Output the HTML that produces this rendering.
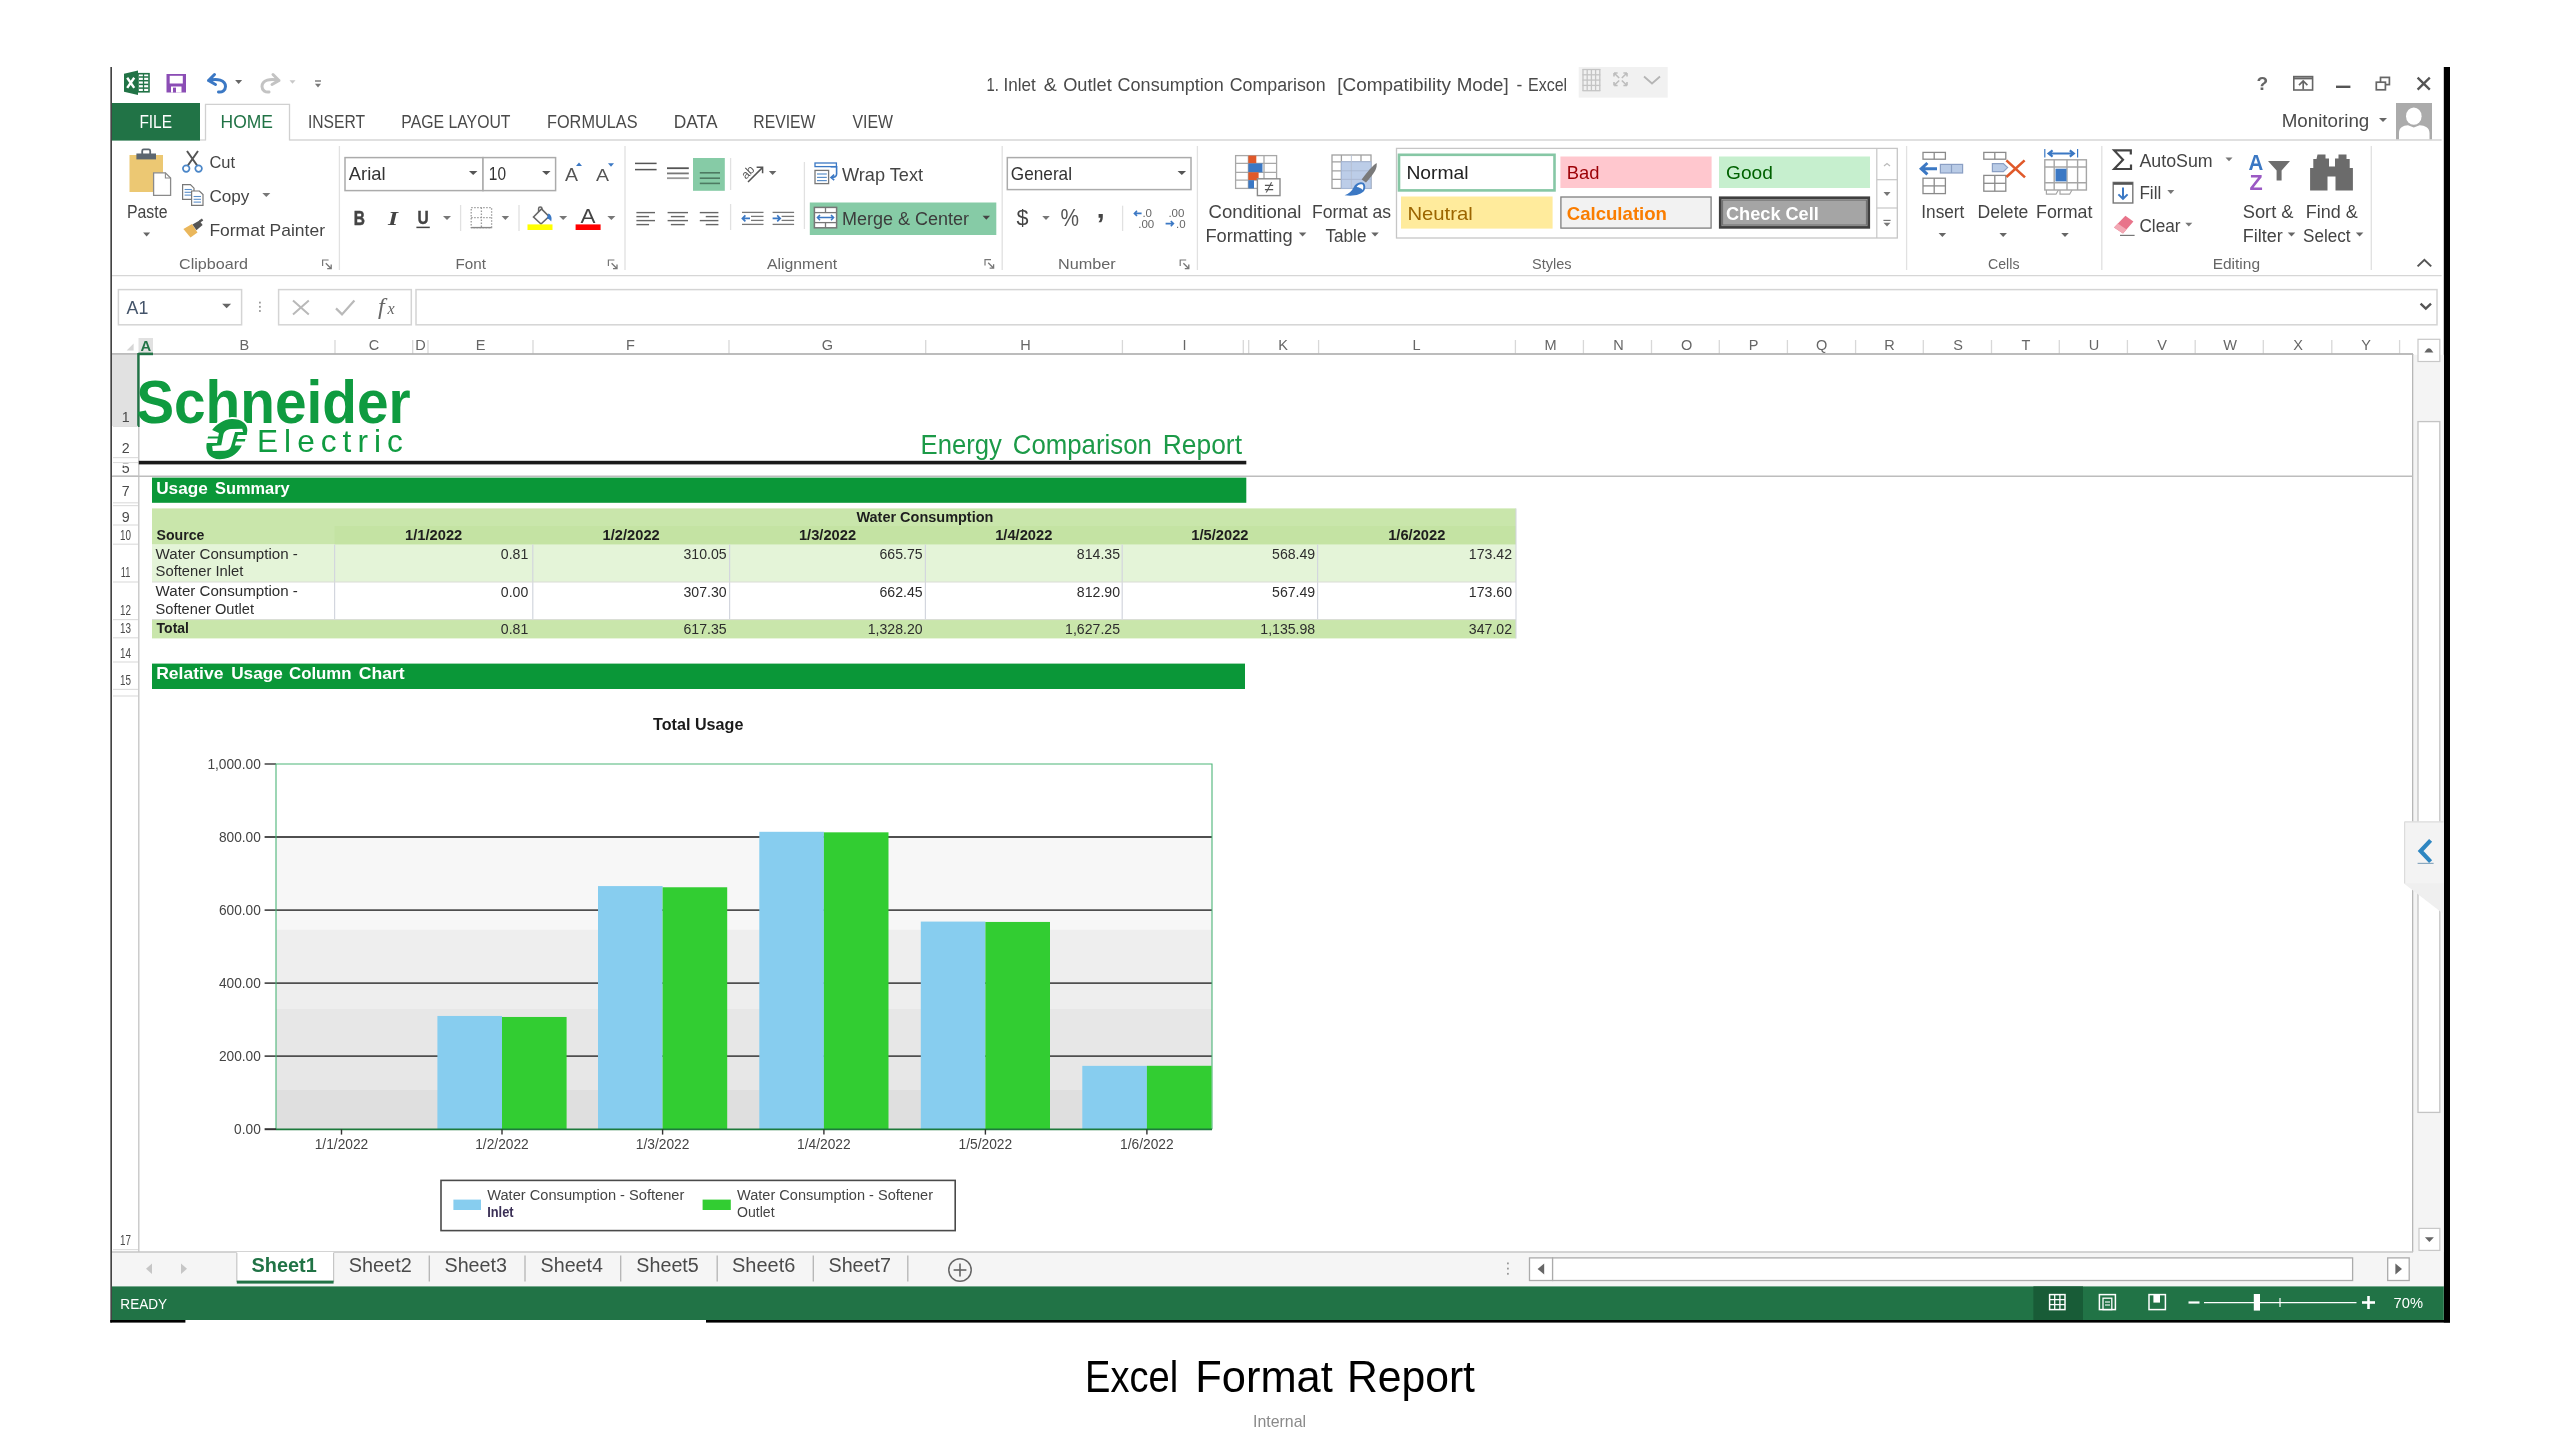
<!DOCTYPE html>
<html lang="en"><head><meta charset="utf-8"><title>Excel Format Report</title>
<style>
html,body{margin:0;padding:0;background:#fff;}
body{width:2560px;height:1440px;overflow:hidden;font-family:"Liberation Sans",sans-serif;}
svg{display:block;will-change:transform;font-family:"Liberation Sans",sans-serif;}
text{white-space:pre;}
</style></head><body>
<svg width="2560" height="1440" viewBox="0 0 2560 1440">
<rect x="0.00" y="0.00" width="2560.00" height="1440.00" fill="#ffffff" />
<rect x="110.40" y="67.00" width="1.50" height="1255.50" fill="#303030" />
<rect x="2443.80" y="67.00" width="6.20" height="1255.50" fill="#000000" />
<g transform="translate(124,70.5)">
<path d="M0,3.2 L14,0 V24.5 L0,21.3 Z" fill="#217346" />
<rect x="14.00" y="3.20" width="11.00" height="18.10" fill="#ffffff" stroke="#217346" stroke-width="1.6" />
<line x1="15.00" y1="6.50" x2="24.50" y2="6.50" stroke="#217346" stroke-width="1.5" />
<line x1="15.00" y1="10.20" x2="24.50" y2="10.20" stroke="#217346" stroke-width="1.5" />
<line x1="15.00" y1="13.90" x2="24.50" y2="13.90" stroke="#217346" stroke-width="1.5" />
<line x1="15.00" y1="17.60" x2="24.50" y2="17.60" stroke="#217346" stroke-width="1.5" />
<line x1="19.50" y1="3.50" x2="19.50" y2="21.00" stroke="#217346" stroke-width="1.3" />
<path d="M3.2,7.2 L10.2,17.4 M10.2,7.2 L3.2,17.4" fill="none" stroke="#ffffff" stroke-width="2.4" />
</g>
<g transform="translate(166.5,74)">
<path d="M0,0 H19.5 V18.5 H0 Z" fill="#8b4db5" />
<rect x="3.20" y="1.80" width="13.10" height="7.70" fill="#ffffff" />
<rect x="4.50" y="12.50" width="10.50" height="6.00" fill="#ffffff" />
<rect x="6.50" y="13.60" width="3.00" height="4.90" fill="#8b4db5" />
</g>
<path d="M208.5,80.5 L214.5,74.5 M208.5,80.5 L215.5,84.5 M208.5,80.5 C217,78 225.5,80 225.5,86.5 C225.5,90.5 222,92.5 218.5,92" fill="none" stroke="#3b78c4" stroke-width="3" stroke-linecap="round" stroke-linejoin="round"/>
<path d="M235.10,80.00h7l-3.5,4z" fill="#666" />
<path d="M279,80.5 L273,74.5 M279,80.5 L272,84.5 M279,80.5 C270.5,78 262,80 262,86.5 C262,90.5 265.5,92.5 269,92" fill="none" stroke="#c3c3c3" stroke-width="3" stroke-linecap="round" stroke-linejoin="round"/>
<path d="M289.50,80.25h6l-3.0,3.5z" fill="#c8c8c8" />
<line x1="315.00" y1="81.00" x2="321.00" y2="81.00" stroke="#777" stroke-width="1.4" />
<path d="M315.00,83.80h6l-3.0,3.6z" fill="#777" />
<text x="986.60" y="91.20" font-size="17.88" fill="#4a4a4a" textLength="12.40" lengthAdjust="spacingAndGlyphs" >1.</text>
<text x="1003.40" y="91.20" font-size="17.88" fill="#4a4a4a" textLength="32.30" lengthAdjust="spacingAndGlyphs" >Inlet</text>
<text x="1043.80" y="91.20" font-size="17.88" fill="#4a4a4a" textLength="13.00" lengthAdjust="spacingAndGlyphs" >&amp;</text>
<text x="1063.20" y="91.20" font-size="17.88" fill="#4a4a4a" textLength="48.60" lengthAdjust="spacingAndGlyphs" >Outlet</text>
<text x="1117.60" y="91.20" font-size="17.88" fill="#4a4a4a" textLength="106.10" lengthAdjust="spacingAndGlyphs" >Consumption</text>
<text x="1229.70" y="91.20" font-size="17.88" fill="#4a4a4a" textLength="96.00" lengthAdjust="spacingAndGlyphs" >Comparison</text>
<text x="1337.30" y="91.20" font-size="17.88" fill="#4a4a4a" textLength="113.60" lengthAdjust="spacingAndGlyphs" >[Compatibility</text>
<text x="1456.70" y="91.20" font-size="17.88" fill="#4a4a4a" textLength="52.00" lengthAdjust="spacingAndGlyphs" >Mode]</text>
<text x="1516.50" y="91.20" font-size="17.88" fill="#4a4a4a" textLength="5.80" lengthAdjust="spacingAndGlyphs" >-</text>
<text x="1528.00" y="91.20" font-size="17.88" fill="#4a4a4a" textLength="39.10" lengthAdjust="spacingAndGlyphs" >Excel</text>
<rect x="1578.70" y="67.00" width="89.00" height="30.60" fill="#f1f1f1" />
<g stroke="#c4c4c4" stroke-width="1.3">
<line x1="1583.00" y1="69.00" x2="1583.00" y2="91.00" />
<line x1="1587.20" y1="69.00" x2="1587.20" y2="91.00" />
<line x1="1591.40" y1="69.00" x2="1591.40" y2="91.00" />
<line x1="1595.60" y1="69.00" x2="1595.60" y2="91.00" />
<line x1="1599.80" y1="69.00" x2="1599.80" y2="91.00" />
<line x1="1582.50" y1="69.50" x2="1600.30" y2="69.50" />
<line x1="1582.50" y1="74.80" x2="1600.30" y2="74.80" />
<line x1="1582.50" y1="80.10" x2="1600.30" y2="80.10" />
<line x1="1582.50" y1="85.40" x2="1600.30" y2="85.40" />
<line x1="1582.50" y1="90.70" x2="1600.30" y2="90.70" />
</g>
<path d="M1614,73 l5.2,5 M1627,73 l-5.2,5 M1614,85.5 l5.2,-5 M1627,85.5 l-5.2,-5 M1614,73 h3.6 M1614,73 v3.6 M1627,73 h-3.6 M1627,73 v3.6 M1614,85.5 h3.6 M1614,85.5 v-3.6 M1627,85.5 h-3.6 M1627,85.5 v-3.6" fill="none" stroke="#bdbdbd" stroke-width="1.6" />
<path d="M1644,76.5 l8,7 l8,-7" fill="none" stroke="#b5b5b5" stroke-width="1.8" />
<text x="2262.40" y="90.00" font-size="19.19" fill="#666" font-weight="bold" text-anchor="middle" >?</text>
<rect x="2293.80" y="76.60" width="18.80" height="13.40" fill="none" stroke="#666" stroke-width="1.6" />
<line x1="2293.80" y1="78.40" x2="2312.60" y2="78.40" stroke="#666" stroke-width="2" />
<path d="M2303.2,89.5 V81 M2299,85.2 L2303.2,81 L2307.4,85.2" fill="none" stroke="#666" stroke-width="1.7" />
<rect x="2336.00" y="85.60" width="14.40" height="2.40" fill="#555" />
<rect x="2380.50" y="77.40" width="8.90" height="7.20" fill="none" stroke="#666" stroke-width="1.7" />
<rect x="2376.30" y="82.20" width="9.10" height="7.60" fill="#fff" stroke="#666" stroke-width="1.7" />
<path d="M2417.6,77.6 L2429.8,89.6 M2429.8,77.6 L2417.6,89.6" fill="none" stroke="#555" stroke-width="2.3" />
<rect x="112.00" y="103.00" width="88.00" height="37.60" fill="#217346" />
<text x="139.40" y="128.00" font-size="19.19" fill="#ffffff" textLength="32.60" lengthAdjust="spacingAndGlyphs" >FILE</text>
<line x1="200.00" y1="140.00" x2="205.50" y2="140.00" stroke="#d6d6d6" stroke-width="1.3" />
<line x1="289.50" y1="140.00" x2="2441.60" y2="140.00" stroke="#d6d6d6" stroke-width="1.3" />
<path d="M205.5,140.6 V104.3 H289.5 V140.6" fill="#ffffff" stroke="#d0d0d0" stroke-width="1.3" />
<text x="220.60" y="128.00" font-size="19.19" fill="#217346" textLength="52.40" lengthAdjust="spacingAndGlyphs" >HOME</text>
<text x="308.00" y="128.00" font-size="19.19" fill="#4a4a4a" textLength="57.00" lengthAdjust="spacingAndGlyphs" >INSERT</text>
<text x="401.30" y="128.00" font-size="19.19" fill="#4a4a4a" textLength="109.20" lengthAdjust="spacingAndGlyphs" >PAGE LAYOUT</text>
<text x="547.00" y="128.00" font-size="19.19" fill="#4a4a4a" textLength="90.50" lengthAdjust="spacingAndGlyphs" >FORMULAS</text>
<text x="673.80" y="128.00" font-size="19.19" fill="#4a4a4a" textLength="43.70" lengthAdjust="spacingAndGlyphs" >DATA</text>
<text x="753.30" y="128.00" font-size="19.19" fill="#4a4a4a" textLength="62.20" lengthAdjust="spacingAndGlyphs" >REVIEW</text>
<text x="852.50" y="128.00" font-size="19.19" fill="#4a4a4a" textLength="40.50" lengthAdjust="spacingAndGlyphs" >VIEW</text>
<text x="2281.70" y="127.00" font-size="18.90" fill="#4a4a4a" textLength="87.60" lengthAdjust="spacingAndGlyphs" >Monitoring</text>
<path d="M2379.00,117.90h8l-4.0,4.2z" fill="#666" />
<rect x="2396.00" y="103.00" width="36.00" height="36.30" fill="#ababab" />
<ellipse cx="2413.8" cy="116.2" rx="7.8" ry="8.6" fill="#fff"/>
<path d="M2399,139.3 V133 C2399,127.5 2403,125.6 2408,125.2 L2413.8,127.4 L2419.6,125.2 C2425,125.6 2429.5,127.5 2429.5,133 V139.3 Z" fill="#fff" />
<line x1="112.00" y1="275.60" x2="2441.60" y2="275.60" stroke="#d6d6d6" stroke-width="1.4" />
<rect x="129.50" y="155.00" width="33.50" height="37.00" fill="#ecc873" />
<rect x="136.40" y="153.50" width="19.60" height="5.90" fill="#5c6670" />
<rect x="142.20" y="149.40" width="8.00" height="5.60" fill="none" stroke="#5c6670" stroke-width="1.8" rx="1.5" />
<path d="M153.6,172.8 H165.4 L170.6,178 V195.4 H153.6 Z" fill="#ffffff" stroke="#8a8a8a" stroke-width="1.3" />
<path d="M165.4,172.8 V178 H170.6" fill="none" stroke="#8a8a8a" stroke-width="1.1" />
<text x="127.00" y="217.50" font-size="17.44" fill="#444444" textLength="40.50" lengthAdjust="spacingAndGlyphs" >Paste</text>
<path d="M143.10,232.60h7l-3.5,4z" fill="#666" />
<path d="M187,151 L197.5,166 M198,151 L187.5,166" fill="none" stroke="#555" stroke-width="2" />
<circle cx="186.2" cy="168.6" r="3.3" fill="none" stroke="#4a86c8" stroke-width="1.7"/>
<circle cx="198.6" cy="168.6" r="3.3" fill="none" stroke="#4a86c8" stroke-width="1.7"/>
<text x="209.40" y="168.00" font-size="17.15" fill="#444444" textLength="25.60" lengthAdjust="spacingAndGlyphs" >Cut</text>
<path d="M182.6,184.6 H190.4 L194,188.2 V199.4 H182.6 Z" fill="#fff" stroke="#777" stroke-width="1.2" />
<line x1="184.60" y1="189.50" x2="191.80" y2="189.50" stroke="#5b8fc9" stroke-width="1.1" />
<line x1="184.60" y1="192.30" x2="191.80" y2="192.30" stroke="#5b8fc9" stroke-width="1.1" />
<line x1="184.60" y1="195.10" x2="191.80" y2="195.10" stroke="#5b8fc9" stroke-width="1.1" />
<path d="M191.6,191 H199.4 L203,194.6 V205.4 H191.6 Z" fill="#fff" stroke="#777" stroke-width="1.2" />
<line x1="193.60" y1="196.50" x2="201.00" y2="196.50" stroke="#5b8fc9" stroke-width="1.1" />
<line x1="193.60" y1="199.30" x2="201.00" y2="199.30" stroke="#5b8fc9" stroke-width="1.1" />
<line x1="193.60" y1="202.10" x2="201.00" y2="202.10" stroke="#5b8fc9" stroke-width="1.1" />
<text x="209.40" y="202.00" font-size="17.15" fill="#444444" textLength="40.00" lengthAdjust="spacingAndGlyphs" >Copy</text>
<path d="M262.30,193.00h8l-4.0,4z" fill="#777" />
<path d="M183.4,229 L192,224 L197.5,232.5 L190.5,237.5 Z" fill="#eab75c" />
<path d="M192.5,224.5 L199.4,220.4 L202.6,225 L196.4,230.2 Z" fill="#555" />
<path d="M199.6,221.4 L202.6,219.4" fill="none" stroke="#555" stroke-width="2.4" />
<text x="209.40" y="236.00" font-size="17.15" fill="#444444" textLength="115.60" lengthAdjust="spacingAndGlyphs" >Format Painter</text>
<text x="179.00" y="268.80" font-size="15.41" fill="#666666" textLength="69.00" lengthAdjust="spacingAndGlyphs" >Clipboard</text>
<path d="M322.6,266 V260 H328.6" fill="none" stroke="#777" stroke-width="1.2" />
<path d="M325.8,263.2 L330.8,268.2 M331.20000000000005,264.6 V268.6 H327.20000000000005" fill="none" stroke="#777" stroke-width="1.3" />
<line x1="339.40" y1="146.00" x2="339.40" y2="270.00" stroke="#e1e1e1" stroke-width="1.3" />
<rect x="345.00" y="157.60" width="138.00" height="33.00" fill="#fff" stroke="#ababab" stroke-width="1.5" />
<rect x="483.00" y="157.60" width="72.60" height="33.00" fill="#fff" stroke="#ababab" stroke-width="1.5" />
<text x="348.80" y="180.00" font-size="18.60" fill="#333" textLength="36.80" lengthAdjust="spacingAndGlyphs" >Arial</text>
<path d="M468.95,170.90h8.5l-4.25,4.2z" fill="#555" />
<text x="488.80" y="180.00" font-size="18.60" fill="#333" textLength="17.20" lengthAdjust="spacingAndGlyphs" >10</text>
<path d="M542.05,170.90h8.5l-4.25,4.2z" fill="#555" />
<text x="565.00" y="180.60" font-size="18.90" fill="#555" textLength="13.00" lengthAdjust="spacingAndGlyphs" >A</text>
<path d="M576,166 l3,-3.5 l3,3.5 z" fill="#3b78c4" />
<text x="596.00" y="181.00" font-size="16.72" fill="#555" textLength="13.00" lengthAdjust="spacingAndGlyphs" >A</text>
<path d="M608,163.2 h6 l-3,3.6 z" fill="#3b78c4" />
<text x="353.80" y="225.40" font-size="19.77" fill="#444" font-weight="bold" textLength="11.20" lengthAdjust="spacingAndGlyphs" stroke="#444" stroke-width="0.5">B</text>
<text x="388.00" y="225.40" font-size="19.77" fill="#444" font-weight="bold" font-family="Liberation Serif" font-style="italic" textLength="10.00" lengthAdjust="spacingAndGlyphs" >I</text>
<text x="417.40" y="224.00" font-size="18.02" fill="#444" font-weight="bold" textLength="11.20" lengthAdjust="spacingAndGlyphs" stroke="#444" stroke-width="0.4">U</text>
<line x1="416.40" y1="227.40" x2="429.80" y2="227.40" stroke="#444" stroke-width="1.5" />
<path d="M443.00,216.00h8l-4.0,4z" fill="#777" />
<line x1="460.60" y1="205.00" x2="460.60" y2="231.00" stroke="#e1e1e1" stroke-width="1.3" />
<g stroke="#9a9a9a" stroke-width="1.3" stroke-dasharray="1.5,1.5">
<rect x="471.20" y="207.60" width="20.40" height="20.00" fill="none" />
<line x1="481.40" y1="207.60" x2="481.40" y2="227.60" />
<line x1="471.20" y1="217.60" x2="491.60" y2="217.60" />
</g>
<line x1="471.20" y1="227.60" x2="491.60" y2="227.60" stroke="#888" stroke-width="1.4" />
<path d="M501.65,216.00h7.5l-3.75,4z" fill="#777" />
<line x1="519.00" y1="205.00" x2="519.00" y2="231.00" stroke="#e1e1e1" stroke-width="1.3" />
<path d="M533.5,217 L541.5,209 L549,216.5 L541,224 Z" fill="#fff" stroke="#666" stroke-width="1.6" />
<path d="M538.6,212 V208.4 C538.6,206.4 542,206.4 542,208.4 V210" fill="none" stroke="#666" stroke-width="1.5" />
<path d="M548.4,213.4 C551.4,214.6 552.2,218 551.2,221.6 C549.8,219.4 548.2,218.6 546.8,218.4 Z" fill="#3b78c4" />
<rect x="527.50" y="224.40" width="25.00" height="5.60" fill="#ffff00" />
<path d="M559.20,216.00h8l-4.0,4z" fill="#777" />
<text x="580.60" y="223.00" font-size="20.93" fill="#444" textLength="15.00" lengthAdjust="spacingAndGlyphs" >A</text>
<rect x="575.60" y="224.40" width="25.00" height="5.60" fill="#ff0000" />
<path d="M607.40,216.00h8l-4.0,4z" fill="#777" />
<text x="455.60" y="268.80" font-size="15.12" fill="#666666" textLength="30.40" lengthAdjust="spacingAndGlyphs" >Font</text>
<path d="M608.4,266 V260 H614.4" fill="none" stroke="#777" stroke-width="1.2" />
<path d="M611.6,263.2 L616.6,268.2 M617.0,264.6 V268.6 H613.0" fill="none" stroke="#777" stroke-width="1.3" />
<line x1="625.00" y1="146.00" x2="625.00" y2="270.00" stroke="#e1e1e1" stroke-width="1.3" />
<line x1="635.00" y1="163.40" x2="656.60" y2="163.40" stroke="#555" stroke-width="1.5" />
<line x1="635.00" y1="169.60" x2="656.60" y2="169.60" stroke="#555" stroke-width="1.5" />
<line x1="667.00" y1="168.20" x2="688.80" y2="168.20" stroke="#555" stroke-width="1.8" />
<line x1="667.00" y1="173.40" x2="688.80" y2="173.40" stroke="#777" stroke-width="1.8" />
<line x1="667.00" y1="178.20" x2="688.80" y2="178.20" stroke="#999" stroke-width="1.8" />
<rect x="693.00" y="158.00" width="31.80" height="32.80" fill="#86cba6" />
<line x1="699.80" y1="172.80" x2="720.00" y2="172.80" stroke="#4d7a62" stroke-width="1.6" />
<line x1="699.80" y1="178.20" x2="720.00" y2="178.20" stroke="#4d7a62" stroke-width="1.6" />
<line x1="699.80" y1="183.40" x2="720.00" y2="183.40" stroke="#4d7a62" stroke-width="1.6" />
<line x1="730.60" y1="158.00" x2="730.60" y2="190.00" stroke="#e1e1e1" stroke-width="1.3" />
<text x="741.00" y="176.00" font-size="12.00" fill="#555" transform="rotate(-45 748 172)">ab</text>
<path d="M748,182 L762.4,167.6 M756.6,167.2 H762.6 V173.2" fill="none" stroke="#555" stroke-width="1.5" />
<path d="M768.85,171.00h7.5l-3.75,4z" fill="#666" />
<line x1="804.40" y1="162.00" x2="804.40" y2="229.00" stroke="#e1e1e1" stroke-width="1.3" />
<rect x="815.00" y="163.00" width="21.40" height="3.60" fill="none" stroke="#3b78c4" stroke-width="1.3" />
<rect x="815.00" y="170.40" width="13.60" height="13.20" fill="#fff" stroke="#777" stroke-width="1.3" />
<line x1="817.00" y1="174.00" x2="826.80" y2="174.00" stroke="#5b8fc9" stroke-width="1.2" />
<line x1="817.00" y1="177.40" x2="826.80" y2="177.40" stroke="#5b8fc9" stroke-width="1.2" />
<line x1="817.00" y1="180.60" x2="826.80" y2="180.60" stroke="#5b8fc9" stroke-width="1.2" />
<path d="M830.6,166.8 H836.6 V174 C836.6,177.2 833.8,177.4 831.4,177.4 M834.2,174.6 L831,177.4 L834.2,180.2" fill="none" stroke="#3b78c4" stroke-width="1.6" />
<text x="842.00" y="180.60" font-size="17.73" fill="#444444" textLength="81.00" lengthAdjust="spacingAndGlyphs" >Wrap Text</text>
<rect x="809.80" y="202.50" width="186.50" height="32.50" fill="#86cba6" />
<rect x="814.40" y="207.40" width="22.20" height="20.40" fill="#fff" stroke="#777" stroke-width="1.5" />
<line x1="814.40" y1="212.60" x2="836.60" y2="212.60" stroke="#777" stroke-width="1.3" />
<line x1="814.40" y1="222.60" x2="836.60" y2="222.60" stroke="#777" stroke-width="1.3" />
<line x1="825.50" y1="207.40" x2="825.50" y2="212.60" stroke="#777" stroke-width="1.3" />
<line x1="825.50" y1="222.60" x2="825.50" y2="227.80" stroke="#777" stroke-width="1.3" />
<path d="M817.4,217.6 H833.6 M820,215 L817.4,217.6 L820,220.2 M831,215 L833.6,217.6 L831,220.2" fill="none" stroke="#3b78c4" stroke-width="1.5" />
<text x="842.00" y="225.00" font-size="18.02" fill="#3c3c3c" textLength="127.00" lengthAdjust="spacingAndGlyphs" >Merge &amp; Center</text>
<path d="M982.55,215.80h7.5l-3.75,4z" fill="#444" />
<line x1="636.40" y1="212.60" x2="655.00" y2="212.60" stroke="#666" stroke-width="1.4" />
<line x1="636.40" y1="216.60" x2="649.05" y2="216.60" stroke="#666" stroke-width="1.4" />
<line x1="636.40" y1="220.60" x2="655.00" y2="220.60" stroke="#666" stroke-width="1.4" />
<line x1="636.40" y1="224.60" x2="649.05" y2="224.60" stroke="#666" stroke-width="1.4" />
<line x1="667.60" y1="212.60" x2="688.00" y2="212.60" stroke="#666" stroke-width="1.4" />
<line x1="670.86" y1="216.60" x2="684.74" y2="216.60" stroke="#666" stroke-width="1.4" />
<line x1="667.60" y1="220.60" x2="688.00" y2="220.60" stroke="#666" stroke-width="1.4" />
<line x1="670.86" y1="224.60" x2="684.74" y2="224.60" stroke="#666" stroke-width="1.4" />
<line x1="699.80" y1="212.60" x2="718.40" y2="212.60" stroke="#666" stroke-width="1.4" />
<line x1="705.75" y1="216.60" x2="718.40" y2="216.60" stroke="#666" stroke-width="1.4" />
<line x1="699.80" y1="220.60" x2="718.40" y2="220.60" stroke="#666" stroke-width="1.4" />
<line x1="705.75" y1="224.60" x2="718.40" y2="224.60" stroke="#666" stroke-width="1.4" />
<line x1="730.60" y1="204.00" x2="730.60" y2="230.00" stroke="#e1e1e1" stroke-width="1.3" />
<line x1="742.00" y1="212.40" x2="763.50" y2="212.40" stroke="#777" stroke-width="1.3" />
<line x1="751.00" y1="216.40" x2="763.50" y2="216.40" stroke="#777" stroke-width="1.3" />
<line x1="751.00" y1="220.40" x2="763.50" y2="220.40" stroke="#777" stroke-width="1.3" />
<line x1="742.00" y1="224.40" x2="763.50" y2="224.40" stroke="#777" stroke-width="1.3" />
<path d="M750,218.4 H742.5 M745.4,215.4 L742.4,218.4 L745.4,221.4" fill="none" stroke="#3b78c4" stroke-width="1.7" />
<line x1="772.60" y1="212.40" x2="794.10" y2="212.40" stroke="#777" stroke-width="1.3" />
<line x1="781.60" y1="216.40" x2="794.10" y2="216.40" stroke="#777" stroke-width="1.3" />
<line x1="781.60" y1="220.40" x2="794.10" y2="220.40" stroke="#777" stroke-width="1.3" />
<line x1="772.60" y1="224.40" x2="794.10" y2="224.40" stroke="#777" stroke-width="1.3" />
<path d="M772.6,218.4 H780.1 M777.2,215.4 L780.2,218.4 L777.2,221.4" fill="none" stroke="#3b78c4" stroke-width="1.7" />
<text x="767.00" y="269.20" font-size="15.12" fill="#666666" textLength="70.20" lengthAdjust="spacingAndGlyphs" >Alignment</text>
<path d="M985,265.6 V259.6 H991" fill="none" stroke="#777" stroke-width="1.2" />
<path d="M988.2,262.8 L993.2,267.8 M993.6,264.20000000000005 V268.20000000000005 H989.6" fill="none" stroke="#777" stroke-width="1.3" />
<line x1="1002.20" y1="146.00" x2="1002.20" y2="270.00" stroke="#e1e1e1" stroke-width="1.3" />
<rect x="1007.30" y="157.60" width="183.70" height="32.00" fill="#fff" stroke="#ababab" stroke-width="1.5" />
<text x="1010.80" y="180.00" font-size="18.60" fill="#333" textLength="61.20" lengthAdjust="spacingAndGlyphs" >General</text>
<path d="M1177.55,170.90h8.5l-4.25,4.2z" fill="#555" />
<text x="1016.40" y="225.00" font-size="22.67" fill="#444" textLength="12.00" lengthAdjust="spacingAndGlyphs" >$</text>
<path d="M1042.25,216.00h7.5l-3.75,4z" fill="#777" />
<text x="1060.50" y="226.00" font-size="23.84" fill="#555" textLength="18.50" lengthAdjust="spacingAndGlyphs" >%</text>
<text x="1096.60" y="234.40" font-size="30.00" fill="#444" font-weight="bold" >’</text>
<line x1="1122.60" y1="205.70" x2="1122.60" y2="231.00" stroke="#e1e1e1" stroke-width="1.3" />
<text x="1142.40" y="217.40" font-size="11.50" fill="#666" >.0</text>
<text x="1138.20" y="227.80" font-size="11.50" fill="#666" >.00</text>
<path d="M1141.6,213.4 H1134.4 M1137,210.8 L1134.4,213.4 L1137,216" fill="none" stroke="#3b78c4" stroke-width="1.6" />
<text x="1168.40" y="217.40" font-size="11.50" fill="#666" >.00</text>
<text x="1176.00" y="227.80" font-size="11.50" fill="#666" >.0</text>
<path d="M1165.6,223.6 H1173.4 M1170.8,221 L1173.4,223.6 L1170.8,226.2" fill="none" stroke="#3b78c4" stroke-width="1.6" />
<text x="1058.00" y="269.00" font-size="15.12" fill="#666666" textLength="57.70" lengthAdjust="spacingAndGlyphs" >Number</text>
<path d="M1180.2,266 V260 H1186.2" fill="none" stroke="#777" stroke-width="1.2" />
<path d="M1183.4,263.2 L1188.4,268.2 M1188.8,264.6 V268.6 H1184.8" fill="none" stroke="#777" stroke-width="1.3" />
<line x1="1197.40" y1="146.00" x2="1197.40" y2="270.00" stroke="#e1e1e1" stroke-width="1.3" />
<g stroke="#a8a8a8" stroke-width="1.3" fill="#fff">
<rect x="1235.60" y="155.60" width="41.00" height="32.80" fill="none" />
<line x1="1248.40" y1="155.60" x2="1248.40" y2="188.40" />
<line x1="1264.00" y1="155.60" x2="1264.00" y2="188.40" />
<line x1="1235.60" y1="163.40" x2="1276.60" y2="163.40" />
<line x1="1235.60" y1="172.30" x2="1276.60" y2="172.30" />
<line x1="1235.60" y1="180.20" x2="1276.60" y2="180.20" />
</g>
<rect x="1248.40" y="155.60" width="7.90" height="7.80" fill="#e0592a" />
<rect x="1248.40" y="163.40" width="14.10" height="8.90" fill="#3b78c4" />
<rect x="1248.40" y="172.30" width="10.20" height="7.90" fill="#e0592a" />
<rect x="1248.40" y="180.20" width="5.60" height="8.20" fill="#3b78c4" />
<rect x="1257.40" y="178.80" width="22.60" height="16.80" fill="#fff" stroke="#8a8a8a" stroke-width="1.4" />
<text x="1269.00" y="193.00" font-size="17.00" fill="#555" text-anchor="middle" >≠</text>
<text x="1208.60" y="217.70" font-size="17.44" fill="#444444" textLength="92.90" lengthAdjust="spacingAndGlyphs" >Conditional</text>
<text x="1205.40" y="241.70" font-size="17.44" fill="#444444" textLength="87.30" lengthAdjust="spacingAndGlyphs" >Formatting</text>
<path d="M1298.85,232.40h7.5l-3.75,4z" fill="#666" />
<g stroke="#a0a0a0" stroke-width="1.3" fill="#fff">
<rect x="1332.00" y="155.00" width="39.00" height="33.40" fill="none" />
<line x1="1341.40" y1="155.00" x2="1341.40" y2="188.40" />
<line x1="1361.00" y1="155.00" x2="1361.00" y2="188.40" />
<line x1="1332.00" y1="161.80" x2="1371.00" y2="161.80" />
<line x1="1332.00" y1="170.80" x2="1371.00" y2="170.80" />
<line x1="1332.00" y1="179.40" x2="1371.00" y2="179.40" />
</g>
<rect x="1341.40" y="161.80" width="29.60" height="26.60" fill="#bccde8" stroke="#a3b6d6" stroke-width="1" />
<line x1="1351.40" y1="155.00" x2="1351.40" y2="188.40" stroke="#b6bfd0" stroke-width="0.9" />
<line x1="1341.40" y1="170.80" x2="1371.00" y2="170.80" stroke="#a9b7d0" stroke-width="0.9" />
<line x1="1341.40" y1="179.40" x2="1371.00" y2="179.40" stroke="#a9b7d0" stroke-width="0.9" />
<path d="M1376.6,163 C1377.4,168 1375,172.6 1366,182.6 L1361.6,179.4 C1368,171 1372,166.4 1376.6,163 Z" fill="#7a7a7a" />
<path d="M1363.8,183 C1360,181 1355.4,183.4 1353.6,187.4 C1352,191 1348.6,193.6 1344.6,195.2 C1352,196.4 1361.6,195.4 1364.6,190 C1365.8,187.4 1365.4,184.8 1363.8,183 Z" fill="#3b78c4" />
<path d="M1362.6,184.6 C1360,183.6 1357.6,185 1356.6,187 C1359,187 1361.4,188.4 1362.6,190 C1363.6,188 1363.6,186 1362.6,184.6 Z" fill="#ffffff" />
<text x="1312.00" y="217.70" font-size="17.44" fill="#444444" textLength="79.00" lengthAdjust="spacingAndGlyphs" >Format as</text>
<text x="1325.50" y="241.70" font-size="17.44" fill="#444444" textLength="40.90" lengthAdjust="spacingAndGlyphs" >Table</text>
<path d="M1371.25,232.40h7.5l-3.75,4z" fill="#666" />
<rect x="1396.50" y="148.40" width="500.80" height="89.60" fill="#fff" stroke="#c6c6c6" stroke-width="1.3" />
<rect x="1399.00" y="154.80" width="155.50" height="35.60" fill="#fff" stroke="#86c7a5" stroke-width="2.6" />
<rect x="1560.40" y="156.50" width="151.20" height="31.50" fill="#ffc7ce" />
<rect x="1719.00" y="156.50" width="151.00" height="31.50" fill="#c6efce" />
<rect x="1401.00" y="196.50" width="151.60" height="32.10" fill="#ffeb9c" />
<rect x="1560.90" y="197.00" width="150.20" height="31.10" fill="#f2f2f2" stroke="#7f7f7f" stroke-width="1.3" />
<rect x="1720.20" y="197.70" width="148.60" height="29.70" fill="#a5a5a5" stroke="#3f3f3f" stroke-width="2.6" />
<rect x="1722.60" y="200.10" width="143.80" height="24.90" fill="none" stroke="#6e6e6e" stroke-width="1" />
<text x="1406.40" y="179.00" font-size="18.31" fill="#222" textLength="62.20" lengthAdjust="spacingAndGlyphs" >Normal</text>
<text x="1566.70" y="179.00" font-size="18.31" fill="#9c0006" textLength="32.70" lengthAdjust="spacingAndGlyphs" >Bad</text>
<text x="1726.00" y="179.00" font-size="18.31" fill="#006100" textLength="46.80" lengthAdjust="spacingAndGlyphs" >Good</text>
<text x="1407.40" y="220.00" font-size="18.31" fill="#9c6500" textLength="65.40" lengthAdjust="spacingAndGlyphs" >Neutral</text>
<text x="1566.70" y="220.00" font-size="18.31" fill="#fa7d00" font-weight="bold" textLength="100.30" lengthAdjust="spacingAndGlyphs" >Calculation</text>
<text x="1726.00" y="220.00" font-size="18.31" fill="#ffffff" font-weight="bold" textLength="92.80" lengthAdjust="spacingAndGlyphs" >Check Cell</text>
<line x1="1876.80" y1="148.40" x2="1876.80" y2="238.00" stroke="#c6c6c6" stroke-width="1.2" />
<line x1="1876.80" y1="179.70" x2="1897.30" y2="179.70" stroke="#c6c6c6" stroke-width="1.2" />
<line x1="1876.80" y1="208.00" x2="1897.30" y2="208.00" stroke="#c6c6c6" stroke-width="1.2" />
<path d="M1884,166 l3,-2.4 l3,2.4" fill="none" stroke="#bbb" stroke-width="1.3" />
<path d="M1883.50,192.10h7l-3.5,3.8z" fill="#777" />
<line x1="1883.40" y1="220.40" x2="1890.60" y2="220.40" stroke="#777" stroke-width="1.2" />
<path d="M1883.50,222.70h7l-3.5,3.8z" fill="#777" />
<text x="1532.00" y="269.00" font-size="15.12" fill="#666666" textLength="39.60" lengthAdjust="spacingAndGlyphs" >Styles</text>
<line x1="1906.60" y1="146.00" x2="1906.60" y2="270.00" stroke="#e1e1e1" stroke-width="1.3" />
<g stroke="#8a8a8a" stroke-width="1.3" fill="#fff">
<rect x="1923.00" y="152.40" width="22.40" height="6.80" fill="none" />
<line x1="1934.20" y1="152.40" x2="1934.20" y2="159.20" />
</g>
<g stroke="#8a8a8a" stroke-width="1.3" fill="#fff">
<rect x="1923.00" y="178.20" width="22.40" height="15.40" fill="none" />
<line x1="1934.20" y1="178.20" x2="1934.20" y2="193.60" />
<line x1="1923.00" y1="185.90" x2="1945.40" y2="185.90" />
</g>
<rect x="1940.40" y="164.40" width="22.20" height="8.60" fill="#b9cbe6" stroke="#8a9fc4" stroke-width="1.2" />
<line x1="1951.50" y1="164.40" x2="1951.50" y2="173.00" stroke="#8a9fc4" stroke-width="1.2" />
<path d="M1937,168.7 H1921.6 M1927.4,163 L1921.2,168.7 L1927.4,174.4" fill="none" stroke="#3b78c4" stroke-width="3" />
<text x="1921.30" y="217.70" font-size="17.44" fill="#444444" textLength="43.10" lengthAdjust="spacingAndGlyphs" >Insert</text>
<path d="M1938.65,233.00h7.5l-3.75,4z" fill="#666" />
<g stroke="#8a8a8a" stroke-width="1.3" fill="#fff">
<rect x="1983.80" y="152.40" width="22.00" height="6.80" fill="none" />
<line x1="1994.80" y1="152.40" x2="1994.80" y2="159.20" />
</g>
<g stroke="#8a8a8a" stroke-width="1.3" fill="#fff">
<rect x="1983.80" y="175.40" width="22.00" height="15.80" fill="none" />
<line x1="1994.80" y1="175.40" x2="1994.80" y2="191.20" />
<line x1="1983.80" y1="183.30" x2="2005.80" y2="183.30" />
</g>
<path d="M1992.4,163.6 H2003.4 L2007.6,167.6 L2003.4,171.6 H1992.4 Z" fill="#b9cbe6" stroke="#8a9fc4" stroke-width="1.2" />
<path d="M2006.4,160.4 L2025,177.4 M2024.6,160.4 L2006.4,177" fill="none" stroke="#e0592a" stroke-width="2.6" />
<text x="1977.50" y="217.70" font-size="17.44" fill="#444444" textLength="50.80" lengthAdjust="spacingAndGlyphs" >Delete</text>
<path d="M1999.45,233.00h7.5l-3.75,4z" fill="#666" />
<g stroke="#a6a6a6" stroke-width="1.4" fill="#fff">
<rect x="2044.80" y="159.80" width="41.60" height="30.20" fill="none" />
<line x1="2054.20" y1="159.80" x2="2054.20" y2="190.00" />
<line x1="2067.00" y1="159.80" x2="2067.00" y2="190.00" />
<line x1="2077.60" y1="159.80" x2="2077.60" y2="190.00" />
<line x1="2044.80" y1="167.00" x2="2086.40" y2="167.00" />
<line x1="2044.80" y1="182.70" x2="2086.40" y2="182.70" />
</g>
<rect x="2055.50" y="168.70" width="11.00" height="12.70" fill="#3b78c4" />
<path d="M2046.4,190 V194.2 H2056 L2058.4,190 M2060,190 V194.2 H2069.6 L2072,190" fill="none" stroke="#a6a6a6" stroke-width="1.2" />
<path d="M2049,153.5 H2073.4 M2052.6,150.4 L2048.6,153.5 L2052.6,156.6 M2069.8,150.4 L2073.8,153.5 L2069.8,156.6" fill="none" stroke="#3b78c4" stroke-width="2.2" />
<line x1="2044.80" y1="149.00" x2="2044.80" y2="157.60" stroke="#3b78c4" stroke-width="1.2" />
<line x1="2077.60" y1="149.00" x2="2077.60" y2="157.60" stroke="#3b78c4" stroke-width="1.2" />
<text x="2036.00" y="217.70" font-size="17.44" fill="#444444" textLength="56.40" lengthAdjust="spacingAndGlyphs" >Format</text>
<path d="M2061.25,233.00h7.5l-3.75,4z" fill="#666" />
<text x="1988.00" y="269.00" font-size="15.12" fill="#666666" textLength="31.50" lengthAdjust="spacingAndGlyphs" >Cells</text>
<line x1="2101.80" y1="146.00" x2="2101.80" y2="270.00" stroke="#e1e1e1" stroke-width="1.3" />
<path d="M2130.8,154.6 V150.4 H2114.2 L2123,159.8 L2114.2,169 H2131 V164.6" fill="none" stroke="#444" stroke-width="2.2" />
<text x="2139.40" y="167.30" font-size="17.44" fill="#444444" textLength="73.30" lengthAdjust="spacingAndGlyphs" >AutoSum</text>
<path d="M2225.50,157.50h7l-3.5,3.8z" fill="#777" />
<rect x="2113.20" y="182.40" width="19.60" height="20.60" fill="#fff" stroke="#777" stroke-width="1.4" />
<line x1="2113.20" y1="183.60" x2="2132.80" y2="183.60" stroke="#555" stroke-width="2.4" />
<path d="M2123,187.6 V198.6 M2118.4,194.4 L2123,198.8 L2127.6,194.4" fill="none" stroke="#3b78c4" stroke-width="2" />
<text x="2139.40" y="199.00" font-size="17.44" fill="#444444" textLength="21.90" lengthAdjust="spacingAndGlyphs" >Fill</text>
<path d="M2167.30,190.10h7l-3.5,3.8z" fill="#777" />
<path d="M2114,227.6 L2125.4,215.8 L2133.4,221.4 L2123,233.4 Z" fill="#e8748a" />
<path d="M2114,227.6 L2117.8,223.6 L2126.6,229.4 L2123,233.4 Z" fill="#f2a8b4" />
<line x1="2120.00" y1="235.40" x2="2134.60" y2="235.40" stroke="#777" stroke-width="1.2" />
<text x="2139.40" y="231.90" font-size="17.44" fill="#444444" textLength="41.10" lengthAdjust="spacingAndGlyphs" >Clear</text>
<path d="M2185.30,222.70h7l-3.5,3.8z" fill="#777" />
<text x="2248.60" y="169.60" font-size="21.80" fill="#3b78c4" font-weight="bold" textLength="14.80" lengthAdjust="spacingAndGlyphs" >A</text>
<text x="2249.40" y="190.00" font-size="21.22" fill="#9b59c4" font-weight="bold" textLength="13.20" lengthAdjust="spacingAndGlyphs" >Z</text>
<path d="M2268,161 H2290 L2281.6,170.4 V180.6 H2276.6 V170.4 Z" fill="#6e6e6e" />
<text x="2242.70" y="217.70" font-size="17.44" fill="#444444" textLength="50.90" lengthAdjust="spacingAndGlyphs" >Sort &amp;</text>
<text x="2242.70" y="241.70" font-size="17.44" fill="#444444" textLength="40.00" lengthAdjust="spacingAndGlyphs" >Filter</text>
<path d="M2287.75,232.40h7.5l-3.75,4z" fill="#666" />
<path d="M2317.5,154.5 h8 v4 h3.5 v8 h6 v-8 h3.5 v-4 h8 v4.5 h3.2 v9 h3.2 v22.5 h-17.4 v-14 h-8 v14 h-17.4 v-22.5 h3.2 v-9 h3.2 z" fill="#6b6b6b" />
<text x="2305.70" y="217.70" font-size="17.44" fill="#444444" textLength="52.00" lengthAdjust="spacingAndGlyphs" >Find &amp;</text>
<text x="2303.00" y="241.70" font-size="17.44" fill="#444444" textLength="47.50" lengthAdjust="spacingAndGlyphs" >Select</text>
<path d="M2355.85,232.40h7.5l-3.75,4z" fill="#666" />
<text x="2212.70" y="269.00" font-size="15.12" fill="#666666" textLength="47.30" lengthAdjust="spacingAndGlyphs" >Editing</text>
<line x1="2371.30" y1="146.00" x2="2371.30" y2="270.00" stroke="#e1e1e1" stroke-width="1.3" />
<path d="M2417.6,266.4 L2424.4,259.8 L2431.2,266.4" fill="none" stroke="#555" stroke-width="2" />
<rect x="118.40" y="289.60" width="123.20" height="35.20" fill="#fff" stroke="#d4d4d4" stroke-width="1.5" />
<text x="126.50" y="313.70" font-size="17.73" fill="#44546a" textLength="21.80" lengthAdjust="spacingAndGlyphs" >A1</text>
<path d="M222.10,303.80h9l-4.5,4.4z" fill="#666" />
<rect x="259.00" y="301.70" width="1.80" height="1.80" fill="#9a9a9a" />
<rect x="259.00" y="305.90" width="1.80" height="1.80" fill="#9a9a9a" />
<rect x="259.00" y="310.10" width="1.80" height="1.80" fill="#9a9a9a" />
<rect x="278.60" y="289.60" width="132.70" height="35.20" fill="#fff" stroke="#d4d4d4" stroke-width="1.5" />
<path d="M293,300.6 L308.8,314.6 M308.8,300.6 L293,314.6" fill="none" stroke="#b9b9b9" stroke-width="2" />
<path d="M336,308.4 L342,314.4 L354.4,300.4" fill="none" stroke="#b9b9b9" stroke-width="2.2" />
<text x="378.00" y="314.00" font-size="24.00" fill="#666" font-family="Liberation Serif" font-style="italic" >f</text>
<text x="387.40" y="314.40" font-size="16.00" fill="#666" font-family="Liberation Serif" font-style="italic" >x</text>
<rect x="416.00" y="289.60" width="2021.00" height="35.20" fill="#fff" stroke="#d4d4d4" stroke-width="1.5" />
<path d="M2420.6,303.6 L2425.8,308.6 L2431,303.6" fill="none" stroke="#555" stroke-width="2.4" />
<rect x="138.50" y="338.00" width="14.50" height="15.40" fill="#e1e1e1" />
<path d="M126.6,350.4 H133.6 V343.4 Z" fill="#d6d6d6" />
<text x="145.80" y="350.60" font-size="14.83" fill="#217346" font-weight="bold" text-anchor="middle" >A</text>
<text x="244.40" y="350.40" font-size="14.53" fill="#666666" text-anchor="middle" >B</text>
<text x="374.00" y="350.40" font-size="14.53" fill="#666666" text-anchor="middle" >C</text>
<text x="420.40" y="350.40" font-size="14.53" fill="#666666" text-anchor="middle" >D</text>
<text x="480.60" y="350.40" font-size="14.53" fill="#666666" text-anchor="middle" >E</text>
<text x="630.40" y="350.40" font-size="14.53" fill="#666666" text-anchor="middle" >F</text>
<text x="827.50" y="350.40" font-size="14.53" fill="#666666" text-anchor="middle" >G</text>
<text x="1025.50" y="350.40" font-size="14.53" fill="#666666" text-anchor="middle" >H</text>
<text x="1184.50" y="350.40" font-size="14.53" fill="#666666" text-anchor="middle" >I</text>
<text x="1283.00" y="350.40" font-size="14.53" fill="#666666" text-anchor="middle" >K</text>
<text x="1416.60" y="350.40" font-size="14.53" fill="#666666" text-anchor="middle" >L</text>
<text x="1550.60" y="350.40" font-size="14.53" fill="#666666" text-anchor="middle" >M</text>
<text x="1618.60" y="350.40" font-size="14.53" fill="#666666" text-anchor="middle" >N</text>
<text x="1686.60" y="350.40" font-size="14.53" fill="#666666" text-anchor="middle" >O</text>
<text x="1753.60" y="350.40" font-size="14.53" fill="#666666" text-anchor="middle" >P</text>
<text x="1821.60" y="350.40" font-size="14.53" fill="#666666" text-anchor="middle" >Q</text>
<text x="1889.60" y="350.40" font-size="14.53" fill="#666666" text-anchor="middle" >R</text>
<text x="1958.00" y="350.40" font-size="14.53" fill="#666666" text-anchor="middle" >S</text>
<text x="2026.00" y="350.40" font-size="14.53" fill="#666666" text-anchor="middle" >T</text>
<text x="2094.00" y="350.40" font-size="14.53" fill="#666666" text-anchor="middle" >U</text>
<text x="2162.00" y="350.40" font-size="14.53" fill="#666666" text-anchor="middle" >V</text>
<text x="2230.00" y="350.40" font-size="14.53" fill="#666666" text-anchor="middle" >W</text>
<text x="2298.00" y="350.40" font-size="14.53" fill="#666666" text-anchor="middle" >X</text>
<text x="2366.00" y="350.40" font-size="14.53" fill="#666666" text-anchor="middle" >Y</text>
<line x1="335.00" y1="340.00" x2="335.00" y2="353.40" stroke="#d8d8d8" stroke-width="1.3" />
<line x1="412.70" y1="340.00" x2="412.70" y2="353.40" stroke="#d8d8d8" stroke-width="1.3" />
<line x1="428.00" y1="340.00" x2="428.00" y2="353.40" stroke="#d8d8d8" stroke-width="1.3" />
<line x1="533.00" y1="340.00" x2="533.00" y2="353.40" stroke="#d8d8d8" stroke-width="1.3" />
<line x1="729.00" y1="340.00" x2="729.00" y2="353.40" stroke="#d8d8d8" stroke-width="1.3" />
<line x1="925.70" y1="340.00" x2="925.70" y2="353.40" stroke="#d8d8d8" stroke-width="1.3" />
<line x1="1122.40" y1="340.00" x2="1122.40" y2="353.40" stroke="#d8d8d8" stroke-width="1.3" />
<line x1="1243.30" y1="340.00" x2="1243.30" y2="353.40" stroke="#d8d8d8" stroke-width="1.3" />
<line x1="1248.70" y1="340.00" x2="1248.70" y2="353.40" stroke="#d8d8d8" stroke-width="1.3" />
<line x1="1318.60" y1="340.00" x2="1318.60" y2="353.40" stroke="#d8d8d8" stroke-width="1.3" />
<line x1="1515.40" y1="340.00" x2="1515.40" y2="353.40" stroke="#d8d8d8" stroke-width="1.3" />
<line x1="1583.40" y1="340.00" x2="1583.40" y2="353.40" stroke="#d8d8d8" stroke-width="1.3" />
<line x1="1651.50" y1="340.00" x2="1651.50" y2="353.40" stroke="#d8d8d8" stroke-width="1.3" />
<line x1="1719.30" y1="340.00" x2="1719.30" y2="353.40" stroke="#d8d8d8" stroke-width="1.3" />
<line x1="1787.40" y1="340.00" x2="1787.40" y2="353.40" stroke="#d8d8d8" stroke-width="1.3" />
<line x1="1855.60" y1="340.00" x2="1855.60" y2="353.40" stroke="#d8d8d8" stroke-width="1.3" />
<line x1="1923.30" y1="340.00" x2="1923.30" y2="353.40" stroke="#d8d8d8" stroke-width="1.3" />
<line x1="1991.50" y1="340.00" x2="1991.50" y2="353.40" stroke="#d8d8d8" stroke-width="1.3" />
<line x1="2059.30" y1="340.00" x2="2059.30" y2="353.40" stroke="#d8d8d8" stroke-width="1.3" />
<line x1="2127.40" y1="340.00" x2="2127.40" y2="353.40" stroke="#d8d8d8" stroke-width="1.3" />
<line x1="2195.20" y1="340.00" x2="2195.20" y2="353.40" stroke="#d8d8d8" stroke-width="1.3" />
<line x1="2263.30" y1="340.00" x2="2263.30" y2="353.40" stroke="#d8d8d8" stroke-width="1.3" />
<line x1="2331.80" y1="340.00" x2="2331.80" y2="353.40" stroke="#d8d8d8" stroke-width="1.3" />
<line x1="2399.60" y1="340.00" x2="2399.60" y2="353.40" stroke="#d8d8d8" stroke-width="1.3" />
<line x1="112.00" y1="354.00" x2="2413.00" y2="354.00" stroke="#a6a6a6" stroke-width="1.7" />
<line x1="2412.80" y1="354.00" x2="2412.80" y2="1252.00" stroke="#b4b4b4" stroke-width="1.5" />
<rect x="112.00" y="354.80" width="26.00" height="71.20" fill="#e1e1e1" />
<line x1="138.80" y1="354.00" x2="138.80" y2="1252.00" stroke="#c4c4c4" stroke-width="1.3" />
<rect x="137.20" y="353.00" width="2.40" height="74.00" fill="#217346" />
<rect x="138.40" y="352.60" width="14.60" height="2.60" fill="#217346" />
<text x="125.60" y="422.40" font-size="14.24" fill="#4a4a4a" text-anchor="middle" >1</text>
<text x="125.60" y="452.60" font-size="14.24" fill="#4a4a4a" text-anchor="middle" >2</text>
<text x="125.60" y="472.60" font-size="14.24" fill="#4a4a4a" text-anchor="middle" >5</text>
<text x="125.60" y="496.40" font-size="14.24" fill="#4a4a4a" text-anchor="middle" >7</text>
<text x="125.60" y="522.00" font-size="14.24" fill="#4a4a4a" text-anchor="middle" >9</text>
<text x="120.10" y="540.40" font-size="14.24" fill="#4a4a4a" textLength="11.00" lengthAdjust="spacingAndGlyphs" >10</text>
<text x="120.80" y="577.40" font-size="14.24" fill="#4a4a4a" textLength="9.60" lengthAdjust="spacingAndGlyphs" >11</text>
<text x="120.10" y="615.00" font-size="14.24" fill="#4a4a4a" textLength="11.00" lengthAdjust="spacingAndGlyphs" >12</text>
<text x="120.10" y="633.20" font-size="14.24" fill="#4a4a4a" textLength="11.00" lengthAdjust="spacingAndGlyphs" >13</text>
<text x="120.10" y="657.60" font-size="14.24" fill="#4a4a4a" textLength="11.00" lengthAdjust="spacingAndGlyphs" >14</text>
<text x="120.10" y="685.40" font-size="14.24" fill="#4a4a4a" textLength="11.00" lengthAdjust="spacingAndGlyphs" >15</text>
<text x="120.10" y="1245.20" font-size="14.24" fill="#4a4a4a" textLength="11.00" lengthAdjust="spacingAndGlyphs" >17</text>
<line x1="113.00" y1="426.40" x2="138.00" y2="426.40" stroke="#dedede" stroke-width="1.2" />
<line x1="113.00" y1="457.60" x2="138.00" y2="457.60" stroke="#dedede" stroke-width="1.2" />
<line x1="113.00" y1="462.60" x2="138.00" y2="462.60" stroke="#dedede" stroke-width="1.2" />
<line x1="113.00" y1="476.00" x2="138.00" y2="476.00" stroke="#dedede" stroke-width="1.2" />
<line x1="113.00" y1="502.80" x2="138.00" y2="502.80" stroke="#dedede" stroke-width="1.2" />
<line x1="113.00" y1="505.60" x2="138.00" y2="505.60" stroke="#dedede" stroke-width="1.2" />
<line x1="113.00" y1="525.00" x2="138.00" y2="525.00" stroke="#dedede" stroke-width="1.2" />
<line x1="113.00" y1="544.20" x2="138.00" y2="544.20" stroke="#dedede" stroke-width="1.2" />
<line x1="113.00" y1="582.00" x2="138.00" y2="582.00" stroke="#dedede" stroke-width="1.2" />
<line x1="113.00" y1="619.60" x2="138.00" y2="619.60" stroke="#dedede" stroke-width="1.2" />
<line x1="113.00" y1="637.80" x2="138.00" y2="637.80" stroke="#dedede" stroke-width="1.2" />
<line x1="113.00" y1="662.00" x2="138.00" y2="662.00" stroke="#dedede" stroke-width="1.2" />
<line x1="113.00" y1="689.40" x2="138.00" y2="689.40" stroke="#dedede" stroke-width="1.2" />
<line x1="113.00" y1="696.00" x2="138.00" y2="696.00" stroke="#dedede" stroke-width="1.2" />
<line x1="113.00" y1="1249.60" x2="138.00" y2="1249.60" stroke="#dedede" stroke-width="1.2" />
<rect x="113.00" y="463.40" width="24.60" height="2.20" fill="#fff" />
<line x1="112.00" y1="476.20" x2="2412.80" y2="476.20" stroke="#bdbdbd" stroke-width="1.6" />
<rect x="2413.60" y="354.80" width="30.20" height="897.20" fill="#f4f4f4" />
<rect x="2418.00" y="339.30" width="21.80" height="22.20" fill="#fff" stroke="#c8c8c8" stroke-width="1.2" />
<path d="M2424.4,352.4 h9 l-2.6,-3.4 q-1.9,-1.6 -3.8,0 z" fill="#666" />
<rect x="2418.00" y="421.60" width="21.80" height="690.80" fill="#fff" stroke="#c4c4c4" stroke-width="1.3" />
<rect x="2419.00" y="1228.40" width="20.80" height="22.00" fill="#fff" stroke="#c8c8c8" stroke-width="1.2" />
<path d="M2424.90,1237.30h9l-4.5,4.6z" fill="#666" />
<path d="M2404.6,821.8 H2443.6 V914 L2404.6,884 Z" fill="#efefef" />
<rect x="2404.60" y="821.80" width="39.00" height="61.60" fill="#f3f3f3" />
<line x1="2404.60" y1="821.80" x2="2404.60" y2="883.40" stroke="#dcdcdc" stroke-width="1.2" />
<line x1="2404.60" y1="821.80" x2="2443.60" y2="821.80" stroke="#dcdcdc" stroke-width="1.2" />
<path d="M2430.6,840.4 L2420.6,851 L2430.6,861.6" fill="none" stroke="#2e86c1" stroke-width="4.2" />
<line x1="2417.60" y1="863.40" x2="2433.60" y2="863.40" stroke="#8aa8bf" stroke-width="1.2" />
<text x="136.20" y="423.00" font-size="60.50" fill="#0f9b40" font-weight="bold" textLength="274.40" lengthAdjust="spacingAndGlyphs" >Schneider</text>
<text x="257.00" y="452.00" font-size="31.60" fill="#0f9b40" textLength="145.8" lengthAdjust="spacing">Electric</text>
<g transform="translate(196,410) scale(0.038889)">
<path d="M415,515 C520,380 700,240 920,232 C1150,225 1330,350 1320,520 L1305,640 L1078,640 L1048,745 L1272,745 L1256,812 L1028,812 L998,915 L1178,915 C1120,1050 950,1270 600,1265 C380,1260 250,1120 268,900 L276,850 L540,850 L560,735 L298,735 L310,680 L572,680 L590,590 Z" fill="#0f9b40" stroke="#ffffff" stroke-width="100" paint-order="stroke" stroke-linejoin="round"/>
<path d="M1190,485 L1212,565 L1005,565 L902,935 C872,1010 820,1046 740,1050 L432,1056 L415,925 L650,908 L702,640 C722,560 780,500 900,490 Z" fill="#ffffff" />
</g>
<text x="920.60" y="453.80" font-size="27.03" fill="#1c9a48" textLength="81.30" lengthAdjust="spacingAndGlyphs" >Energy</text>
<text x="1012.80" y="453.80" font-size="27.03" fill="#1c9a48" textLength="139.10" lengthAdjust="spacingAndGlyphs" >Comparison</text>
<text x="1162.80" y="453.80" font-size="27.03" fill="#1c9a48" textLength="79.20" lengthAdjust="spacingAndGlyphs" >Report</text>
<rect x="138.80" y="460.80" width="1107.50" height="3.60" fill="#1a1a1a" />
<rect x="152.00" y="477.60" width="1094.30" height="25.20" fill="#0a9738" />
<text x="156.20" y="494.40" font-size="15.70" fill="#fff" font-weight="bold" textLength="51.60" lengthAdjust="spacingAndGlyphs" >Usage</text>
<text x="215.00" y="494.40" font-size="15.70" fill="#fff" font-weight="bold" textLength="74.70" lengthAdjust="spacingAndGlyphs" >Summary</text>
<rect x="152.00" y="663.60" width="1093.00" height="25.40" fill="#0a9738" />
<text x="156.20" y="679.40" font-size="15.70" fill="#fff" font-weight="bold" textLength="67.20" lengthAdjust="spacingAndGlyphs" >Relative</text>
<text x="231.20" y="679.40" font-size="15.70" fill="#fff" font-weight="bold" textLength="51.60" lengthAdjust="spacingAndGlyphs" >Usage</text>
<text x="289.00" y="679.40" font-size="15.70" fill="#fff" font-weight="bold" textLength="62.60" lengthAdjust="spacingAndGlyphs" >Column</text>
<text x="358.80" y="679.40" font-size="15.70" fill="#fff" font-weight="bold" textLength="45.90" lengthAdjust="spacingAndGlyphs" >Chart</text>
<rect x="152.00" y="508.40" width="1364.00" height="36.20" fill="#c9e6ab" />
<rect x="334.60" y="526.00" width="1181.40" height="18.60" fill="#c4e3a3" />
<rect x="152.00" y="544.60" width="1364.00" height="37.40" fill="#e4f4d8" />
<rect x="152.00" y="582.00" width="1364.00" height="37.60" fill="#ffffff" />
<rect x="152.00" y="619.60" width="1364.00" height="18.80" fill="#c9e6ab" />
<line x1="334.60" y1="544.60" x2="334.60" y2="619.60" stroke="#d3d6de" stroke-width="1.2" />
<line x1="532.80" y1="544.60" x2="532.80" y2="619.60" stroke="#d3d6de" stroke-width="1.2" />
<line x1="729.60" y1="544.60" x2="729.60" y2="619.60" stroke="#d3d6de" stroke-width="1.2" />
<line x1="925.40" y1="544.60" x2="925.40" y2="619.60" stroke="#d3d6de" stroke-width="1.2" />
<line x1="1122.20" y1="544.60" x2="1122.20" y2="619.60" stroke="#d3d6de" stroke-width="1.2" />
<line x1="1317.60" y1="544.60" x2="1317.60" y2="619.60" stroke="#d3d6de" stroke-width="1.2" />
<line x1="152.00" y1="582.00" x2="1516.00" y2="582.00" stroke="#d9dcd6" stroke-width="1.1" />
<line x1="152.00" y1="619.60" x2="1516.00" y2="619.60" stroke="#d9dcd6" stroke-width="1.0" />
<line x1="1516.00" y1="508.40" x2="1516.00" y2="638.40" stroke="#d3d6de" stroke-width="1.1" />
<text x="856.40" y="521.60" font-size="14.24" fill="#1e1e1e" font-weight="bold" textLength="137.00" lengthAdjust="spacingAndGlyphs" >Water Consumption</text>
<text x="156.60" y="540.30" font-size="14.24" fill="#1e1e1e" font-weight="bold" textLength="47.80" lengthAdjust="spacingAndGlyphs" >Source</text>
<text x="405.10" y="540.30" font-size="14.24" fill="#1e1e1e" font-weight="bold" textLength="57.20" lengthAdjust="spacingAndGlyphs" >1/1/2022</text>
<text x="602.60" y="540.30" font-size="14.24" fill="#1e1e1e" font-weight="bold" textLength="57.20" lengthAdjust="spacingAndGlyphs" >1/2/2022</text>
<text x="798.90" y="540.30" font-size="14.24" fill="#1e1e1e" font-weight="bold" textLength="57.20" lengthAdjust="spacingAndGlyphs" >1/3/2022</text>
<text x="995.20" y="540.30" font-size="14.24" fill="#1e1e1e" font-weight="bold" textLength="57.20" lengthAdjust="spacingAndGlyphs" >1/4/2022</text>
<text x="1191.30" y="540.30" font-size="14.24" fill="#1e1e1e" font-weight="bold" textLength="57.20" lengthAdjust="spacingAndGlyphs" >1/5/2022</text>
<text x="1388.20" y="540.30" font-size="14.24" fill="#1e1e1e" font-weight="bold" textLength="57.20" lengthAdjust="spacingAndGlyphs" >1/6/2022</text>
<text x="155.60" y="558.60" font-size="14.53" fill="#2d2d2d" textLength="142.20" lengthAdjust="spacingAndGlyphs" >Water Consumption -</text>
<text x="155.60" y="576.00" font-size="14.53" fill="#2d2d2d" textLength="87.80" lengthAdjust="spacingAndGlyphs" >Softener Inlet</text>
<text x="155.60" y="596.00" font-size="14.53" fill="#2d2d2d" textLength="142.20" lengthAdjust="spacingAndGlyphs" >Water Consumption -</text>
<text x="155.60" y="613.60" font-size="14.53" fill="#2d2d2d" textLength="98.40" lengthAdjust="spacingAndGlyphs" >Softener Outlet</text>
<text x="156.60" y="633.00" font-size="14.24" fill="#1e1e1e" font-weight="bold" textLength="32.40" lengthAdjust="spacingAndGlyphs" >Total</text>
<text x="500.85" y="559.00" font-size="14.24" fill="#2d2d2d" textLength="27.45" lengthAdjust="spacingAndGlyphs" >0.81</text>
<text x="683.45" y="559.00" font-size="14.24" fill="#2d2d2d" textLength="43.15" lengthAdjust="spacingAndGlyphs" >310.05</text>
<text x="879.45" y="559.00" font-size="14.24" fill="#2d2d2d" textLength="43.15" lengthAdjust="spacingAndGlyphs" >665.75</text>
<text x="1076.85" y="559.00" font-size="14.24" fill="#2d2d2d" textLength="43.15" lengthAdjust="spacingAndGlyphs" >814.35</text>
<text x="1272.05" y="559.00" font-size="14.24" fill="#2d2d2d" textLength="43.15" lengthAdjust="spacingAndGlyphs" >568.49</text>
<text x="1468.85" y="559.00" font-size="14.24" fill="#2d2d2d" textLength="43.15" lengthAdjust="spacingAndGlyphs" >173.42</text>
<text x="500.85" y="596.60" font-size="14.24" fill="#2d2d2d" textLength="27.45" lengthAdjust="spacingAndGlyphs" >0.00</text>
<text x="683.45" y="596.60" font-size="14.24" fill="#2d2d2d" textLength="43.15" lengthAdjust="spacingAndGlyphs" >307.30</text>
<text x="879.45" y="596.60" font-size="14.24" fill="#2d2d2d" textLength="43.15" lengthAdjust="spacingAndGlyphs" >662.45</text>
<text x="1076.85" y="596.60" font-size="14.24" fill="#2d2d2d" textLength="43.15" lengthAdjust="spacingAndGlyphs" >812.90</text>
<text x="1272.05" y="596.60" font-size="14.24" fill="#2d2d2d" textLength="43.15" lengthAdjust="spacingAndGlyphs" >567.49</text>
<text x="1468.85" y="596.60" font-size="14.24" fill="#2d2d2d" textLength="43.15" lengthAdjust="spacingAndGlyphs" >173.60</text>
<text x="500.85" y="634.00" font-size="14.24" fill="#2d2d2d" textLength="27.45" lengthAdjust="spacingAndGlyphs" >0.81</text>
<text x="683.45" y="634.00" font-size="14.24" fill="#2d2d2d" textLength="43.15" lengthAdjust="spacingAndGlyphs" >617.35</text>
<text x="867.70" y="634.00" font-size="14.24" fill="#2d2d2d" textLength="54.90" lengthAdjust="spacingAndGlyphs" >1,328.20</text>
<text x="1065.10" y="634.00" font-size="14.24" fill="#2d2d2d" textLength="54.90" lengthAdjust="spacingAndGlyphs" >1,627.25</text>
<text x="1260.30" y="634.00" font-size="14.24" fill="#2d2d2d" textLength="54.90" lengthAdjust="spacingAndGlyphs" >1,135.98</text>
<text x="1468.85" y="634.00" font-size="14.24" fill="#2d2d2d" textLength="43.15" lengthAdjust="spacingAndGlyphs" >347.02</text>
<text x="653.00" y="730.00" font-size="15.99" fill="#1a1a1a" font-weight="bold" textLength="90.40" lengthAdjust="spacingAndGlyphs" >Total Usage</text>
<rect x="276.00" y="764.00" width="936.00" height="74.00" fill="#ffffff" />
<rect x="276.00" y="838.00" width="936.00" height="91.60" fill="#f7f7f7" />
<rect x="276.00" y="929.60" width="936.00" height="79.40" fill="#eeeeee" />
<rect x="276.00" y="1009.00" width="936.00" height="81.00" fill="#e7e7e7" />
<rect x="276.00" y="1090.00" width="936.00" height="39.20" fill="#dfdfdf" />
<line x1="264.60" y1="1056.16" x2="1212.00" y2="1056.16" stroke="#4f4f4f" stroke-width="1.9" />
<line x1="264.60" y1="983.12" x2="1212.00" y2="983.12" stroke="#4f4f4f" stroke-width="1.9" />
<line x1="264.60" y1="910.08" x2="1212.00" y2="910.08" stroke="#4f4f4f" stroke-width="1.9" />
<line x1="264.60" y1="837.04" x2="1212.00" y2="837.04" stroke="#4f4f4f" stroke-width="1.9" />
<line x1="264.60" y1="764.00" x2="276.00" y2="764.00" stroke="#4f4f4f" stroke-width="1.6" />
<path d="M276.0,1129.2 V764.0 H1212.0 V1129.2" fill="none" stroke="#4db578" stroke-width="1.1" />
<rect x="437.40" y="1015.97" width="64.60" height="113.23" fill="#87cdef" />
<rect x="502.00" y="1016.97" width="64.60" height="112.23" fill="#32cd32" />
<rect x="598.00" y="886.07" width="64.60" height="243.13" fill="#87cdef" />
<rect x="662.60" y="887.27" width="64.60" height="241.93" fill="#32cd32" />
<rect x="759.30" y="831.80" width="64.60" height="297.40" fill="#87cdef" />
<rect x="823.90" y="832.33" width="64.60" height="296.87" fill="#32cd32" />
<rect x="920.80" y="921.59" width="64.60" height="207.61" fill="#87cdef" />
<rect x="985.40" y="921.95" width="64.60" height="207.25" fill="#32cd32" />
<rect x="1082.30" y="1065.87" width="64.60" height="63.33" fill="#87cdef" />
<rect x="1146.90" y="1065.80" width="64.60" height="63.40" fill="#32cd32" />
<line x1="264.60" y1="1129.20" x2="276.00" y2="1129.20" stroke="#333" stroke-width="2" />
<line x1="276.00" y1="1129.40" x2="1212.00" y2="1129.40" stroke="#1d7a3c" stroke-width="1.8" />
<line x1="341.50" y1="1129.20" x2="341.50" y2="1134.60" stroke="#333" stroke-width="1.4" />
<line x1="502.00" y1="1129.20" x2="502.00" y2="1134.60" stroke="#333" stroke-width="1.4" />
<line x1="662.60" y1="1129.20" x2="662.60" y2="1134.60" stroke="#333" stroke-width="1.4" />
<line x1="823.90" y1="1129.20" x2="823.90" y2="1134.60" stroke="#333" stroke-width="1.4" />
<line x1="985.40" y1="1129.20" x2="985.40" y2="1134.60" stroke="#333" stroke-width="1.4" />
<line x1="1146.90" y1="1129.20" x2="1146.90" y2="1134.60" stroke="#333" stroke-width="1.4" />
<text x="234.10" y="1134.20" font-size="14.53" fill="#444" textLength="26.70" lengthAdjust="spacingAndGlyphs" >0.00</text>
<text x="218.90" y="1061.16" font-size="14.53" fill="#444" textLength="41.90" lengthAdjust="spacingAndGlyphs" >200.00</text>
<text x="218.90" y="988.12" font-size="14.53" fill="#444" textLength="41.90" lengthAdjust="spacingAndGlyphs" >400.00</text>
<text x="218.90" y="915.08" font-size="14.53" fill="#444" textLength="41.90" lengthAdjust="spacingAndGlyphs" >600.00</text>
<text x="218.90" y="842.04" font-size="14.53" fill="#444" textLength="41.90" lengthAdjust="spacingAndGlyphs" >800.00</text>
<text x="207.40" y="769.00" font-size="14.53" fill="#444" textLength="53.40" lengthAdjust="spacingAndGlyphs" >1,000.00</text>
<text x="314.70" y="1148.80" font-size="14.53" fill="#444" textLength="53.60" lengthAdjust="spacingAndGlyphs" >1/1/2022</text>
<text x="475.20" y="1148.80" font-size="14.53" fill="#444" textLength="53.60" lengthAdjust="spacingAndGlyphs" >1/2/2022</text>
<text x="635.80" y="1148.80" font-size="14.53" fill="#444" textLength="53.60" lengthAdjust="spacingAndGlyphs" >1/3/2022</text>
<text x="797.10" y="1148.80" font-size="14.53" fill="#444" textLength="53.60" lengthAdjust="spacingAndGlyphs" >1/4/2022</text>
<text x="958.60" y="1148.80" font-size="14.53" fill="#444" textLength="53.60" lengthAdjust="spacingAndGlyphs" >1/5/2022</text>
<text x="1120.10" y="1148.80" font-size="14.53" fill="#444" textLength="53.60" lengthAdjust="spacingAndGlyphs" >1/6/2022</text>
<rect x="441.00" y="1180.40" width="514.20" height="50.20" fill="#fff" stroke="#4a4a4a" stroke-width="1.6" />
<rect x="453.40" y="1199.60" width="27.60" height="10.40" fill="#87cdef" />
<rect x="702.60" y="1199.60" width="28.20" height="10.40" fill="#32cd32" />
<text x="487.20" y="1200.00" font-size="14.24" fill="#444" textLength="197.20" lengthAdjust="spacingAndGlyphs" >Water Consumption - Softener</text>
<text x="487.20" y="1216.60" font-size="14.24" fill="#3a2f55" font-weight="bold" textLength="26.40" lengthAdjust="spacingAndGlyphs" >Inlet</text>
<text x="737.00" y="1200.00" font-size="14.24" fill="#444" textLength="196.00" lengthAdjust="spacingAndGlyphs" >Water Consumption - Softener</text>
<text x="737.00" y="1216.60" font-size="14.24" fill="#444" textLength="37.60" lengthAdjust="spacingAndGlyphs" >Outlet</text>
<rect x="112.00" y="1252.00" width="2331.60" height="34.40" fill="#f5f5f5" />
<line x1="112.00" y1="1252.00" x2="2413.00" y2="1252.00" stroke="#c6c6c6" stroke-width="1.5" />
<rect x="236.80" y="1252.00" width="96.80" height="31.40" fill="#ffffff" />
<line x1="236.80" y1="1252.80" x2="236.80" y2="1282.00" stroke="#c6c6c6" stroke-width="1.2" />
<line x1="333.60" y1="1252.80" x2="333.60" y2="1282.00" stroke="#c6c6c6" stroke-width="1.2" />
<rect x="236.80" y="1280.60" width="96.80" height="3.00" fill="#217346" />
<text x="251.60" y="1272.00" font-size="20.64" fill="#217346" font-weight="bold" textLength="65.20" lengthAdjust="spacingAndGlyphs" >Sheet1</text>
<text x="348.80" y="1272.00" font-size="20.64" fill="#4a4a4a" textLength="62.90" lengthAdjust="spacingAndGlyphs" >Sheet2</text>
<text x="444.50" y="1272.00" font-size="20.64" fill="#4a4a4a" textLength="62.50" lengthAdjust="spacingAndGlyphs" >Sheet3</text>
<text x="540.60" y="1272.00" font-size="20.64" fill="#4a4a4a" textLength="62.40" lengthAdjust="spacingAndGlyphs" >Sheet4</text>
<text x="636.30" y="1272.00" font-size="20.64" fill="#4a4a4a" textLength="62.50" lengthAdjust="spacingAndGlyphs" >Sheet5</text>
<text x="732.00" y="1272.00" font-size="20.64" fill="#4a4a4a" textLength="63.30" lengthAdjust="spacingAndGlyphs" >Sheet6</text>
<text x="828.50" y="1272.00" font-size="20.64" fill="#4a4a4a" textLength="62.50" lengthAdjust="spacingAndGlyphs" >Sheet7</text>
<line x1="429.30" y1="1255.40" x2="429.30" y2="1281.60" stroke="#b4b4b4" stroke-width="1.3" />
<line x1="525.00" y1="1255.40" x2="525.00" y2="1281.60" stroke="#b4b4b4" stroke-width="1.3" />
<line x1="620.70" y1="1255.40" x2="620.70" y2="1281.60" stroke="#b4b4b4" stroke-width="1.3" />
<line x1="717.20" y1="1255.40" x2="717.20" y2="1281.60" stroke="#b4b4b4" stroke-width="1.3" />
<line x1="813.30" y1="1255.40" x2="813.30" y2="1281.60" stroke="#b4b4b4" stroke-width="1.3" />
<line x1="907.80" y1="1255.40" x2="907.80" y2="1281.60" stroke="#b4b4b4" stroke-width="1.3" />
<path d="M152,1263.6 V1274 L146,1268.8 Z" fill="#c6c6c6" />
<path d="M181,1263.6 V1274 L187,1268.8 Z" fill="#c6c6c6" />
<circle cx="960" cy="1270" r="11.2" fill="none" stroke="#666" stroke-width="1.5"/>
<line x1="953.60" y1="1270.00" x2="966.40" y2="1270.00" stroke="#666" stroke-width="1.6" />
<line x1="960.00" y1="1263.60" x2="960.00" y2="1276.40" stroke="#666" stroke-width="1.6" />
<rect x="1507.00" y="1262.50" width="1.80" height="1.80" fill="#9a9a9a" />
<rect x="1507.00" y="1267.70" width="1.80" height="1.80" fill="#9a9a9a" />
<rect x="1507.00" y="1272.90" width="1.80" height="1.80" fill="#9a9a9a" />
<rect x="1529.50" y="1257.90" width="23.10" height="22.60" fill="#fff" stroke="#ababab" stroke-width="1.3" />
<path d="M1544.2,1263.4 V1274.4 L1537.6,1268.9 Z" fill="#666" />
<rect x="1552.60" y="1257.90" width="800.00" height="22.60" fill="#fff" stroke="#ababab" stroke-width="1.3" />
<rect x="2387.70" y="1257.90" width="21.50" height="22.60" fill="#fff" stroke="#ababab" stroke-width="1.3" />
<path d="M2395.4,1263.4 V1274.4 L2402,1268.9 Z" fill="#666" />
<rect x="112.00" y="1286.40" width="2331.80" height="33.60" fill="#217346" />
<text x="120.30" y="1308.60" font-size="15.12" fill="#fff" textLength="46.90" lengthAdjust="spacingAndGlyphs" >READY</text>
<rect x="2033.40" y="1286.40" width="49.60" height="33.60" fill="#185c37" />
<rect x="2049.60" y="1294.60" width="15.40" height="15.00" fill="none" stroke="#ffffff" stroke-width="1.5" />
<line x1="2054.70" y1="1294.60" x2="2054.70" y2="1309.60" stroke="#ffffff" stroke-width="1.3" />
<line x1="2059.90" y1="1294.60" x2="2059.90" y2="1309.60" stroke="#ffffff" stroke-width="1.3" />
<line x1="2049.60" y1="1299.60" x2="2065.00" y2="1299.60" stroke="#ffffff" stroke-width="1.3" />
<line x1="2049.60" y1="1304.60" x2="2065.00" y2="1304.60" stroke="#ffffff" stroke-width="1.3" />
<rect x="2099.40" y="1294.60" width="16.00" height="15.00" fill="none" stroke="#ffffff" stroke-width="1.5" />
<rect x="2103.00" y="1298.20" width="8.80" height="11.40" fill="none" stroke="#ffffff" stroke-width="1.3" />
<line x1="2105.00" y1="1302.00" x2="2110.00" y2="1302.00" stroke="#ffffff" stroke-width="1.1" />
<line x1="2105.00" y1="1305.00" x2="2110.00" y2="1305.00" stroke="#ffffff" stroke-width="1.1" />
<rect x="2149.00" y="1294.60" width="16.40" height="15.00" fill="none" stroke="#ffffff" stroke-width="1.5" />
<rect x="2153.40" y="1294.60" width="6.60" height="8.00" fill="#ffffff" />
<rect x="2188.50" y="1301.40" width="11.00" height="2.20" fill="#ffffff" />
<line x1="2204.00" y1="1302.60" x2="2356.50" y2="1302.60" stroke="#ffffff" stroke-width="1.3" />
<rect x="2253.80" y="1294.00" width="6.20" height="16.60" fill="#ffffff" />
<line x1="2280.00" y1="1298.00" x2="2280.00" y2="1307.00" stroke="#ffffff" stroke-width="1.2" />
<rect x="2362.00" y="1301.20" width="13.00" height="2.60" fill="#ffffff" />
<rect x="2367.20" y="1296.00" width="2.60" height="13.00" fill="#ffffff" />
<text x="2393.60" y="1308.00" font-size="14.83" fill="#ffffff" textLength="29.40" lengthAdjust="spacingAndGlyphs" >70%</text>
<rect x="110.20" y="1320.00" width="75.20" height="2.60" fill="#000" />
<rect x="706.00" y="1320.00" width="1744.00" height="2.60" fill="#000" />
<text x="1085.00" y="1392.20" font-size="44.19" fill="#000000" textLength="93.10" lengthAdjust="spacingAndGlyphs" >Excel</text>
<text x="1195.30" y="1392.20" font-size="44.19" fill="#000000" textLength="137.50" lengthAdjust="spacingAndGlyphs" >Format</text>
<text x="1346.90" y="1392.20" font-size="44.19" fill="#000000" textLength="128.10" lengthAdjust="spacingAndGlyphs" >Report</text>
<text x="1253.00" y="1426.60" font-size="15.70" fill="#8a8a8a" textLength="53.00" lengthAdjust="spacingAndGlyphs" >Internal</text>
</svg>
</body></html>
